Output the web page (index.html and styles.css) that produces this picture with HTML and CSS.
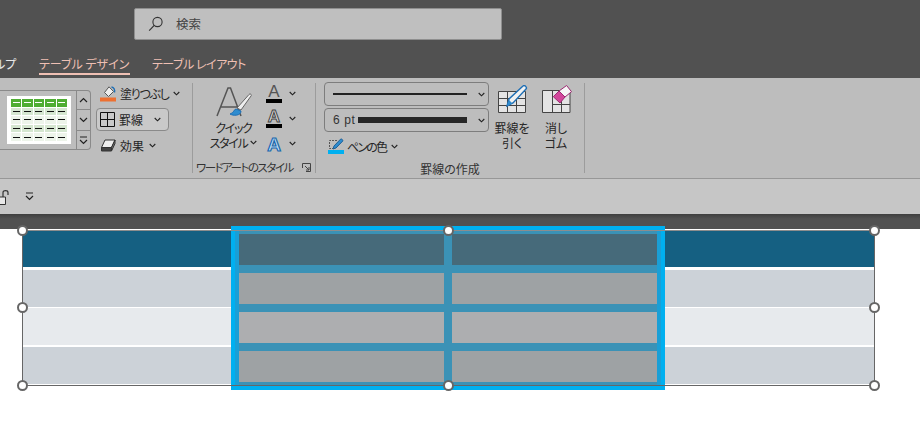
FILE: index.html
```html
<!DOCTYPE html>
<html lang="ja">
<head>
    <meta charset="UTF-8">
    <title>テーブル デザイン</title>
    <link rel="stylesheet" href="styles.css">
</head>
<body>

    <!-- Title bar + tabs -->
    <header class="top">
        <div class="search">
            <svg class="search-icon" width="16" height="16" viewBox="0 0 16 16"><circle cx="9.5" cy="6" r="4.6" fill="none" stroke="#333" stroke-width="1.1"/><path d="M6.2 9.4 1.2 14.6" stroke="#333" stroke-width="1.2"/></svg>
            <span>検索</span>
        </div>
        <nav class="tabs">
            <span class="tab tab-cut">ルプ</span>
            <span class="tab tab-active">テーブル デザイン</span>
            <span class="tab tab-next">テーブル レイアウト</span>
        </nav>
    </header>

    <!-- Ribbon -->
    <section class="ribbon">
        <div class="group group-styles">
            <div class="gallery">
                <div class="thumb">
                    <div class="thumb-grid">
                        <i class="g"></i><i class="g"></i><i class="g"></i><i class="g"></i><i class="g"></i>
                        <i class="d"></i><i class="d"></i><i class="d"></i><i class="d"></i><i class="d"></i>
                        <i class="l"></i><i class="l"></i><i class="l"></i><i class="l"></i><i class="l"></i>
                        <i class="d"></i><i class="d"></i><i class="d"></i><i class="d"></i><i class="d"></i>
                        <i class="l"></i><i class="l"></i><i class="l"></i><i class="l"></i><i class="l"></i>
                    </div>
                </div>
                <div class="spin">
                    <div class="spin-btn"><svg width="9" height="6" viewBox="0 0 9 6"><path d="M1 5 4.5 1.5 8 5" fill="none" stroke="#222" stroke-width="1.2"/></svg></div>
                    <div class="spin-btn"><svg width="9" height="6" viewBox="0 0 9 6"><path d="M1 1 4.5 4.5 8 1" fill="none" stroke="#222" stroke-width="1.2"/></svg></div>
                    <div class="spin-btn"><svg width="9" height="9" viewBox="0 0 9 9"><path d="M1 1H8M1 4 4.5 7.5 8 4" fill="none" stroke="#222" stroke-width="1.2"/></svg></div>
                </div>
            </div>
            <div class="fill-col">
                <div class="cmd">
                    <svg class="cmd-icon" width="16" height="16" viewBox="0 0 16 16"><path d="M9 .8 13.500 5.500 8.500 10.500 4.500 6.500Z" fill="#eee" stroke="#555"/><path d="M11.500 1c2.500.3 3.500 2.500 3 5.500" fill="none" stroke="#1f6fb5" stroke-width="1.500"/><rect y="11.500" width="16" height="4" fill="#ed7031"/></svg>
                    <span class="kana">塗りつぶし</span>
                    <svg class="chev" width="7" height="5" viewBox="0 0 7 5"><path d="M.7 1 3.5 3.8 6.3 1" fill="none" stroke="#222" stroke-width="1.1"/></svg>
                </div>
                <div class="cmd cmd-on">
                    <svg class="cmd-icon" width="15" height="15" viewBox="0 0 15 15"><path d="M.5.5H14.5V14.5H.5ZM7.5.5V14.5M.5 7.5H14.5" fill="none" stroke="#111"/></svg>
                    <span>罫線</span>
                    <svg class="chev chev-far" width="7" height="5" viewBox="0 0 7 5"><path d="M.7 1 3.5 3.8 6.3 1" fill="none" stroke="#222" stroke-width="1.1"/></svg>
                </div>
                <div class="cmd">
                    <svg class="cmd-icon" width="16" height="13" viewBox="0 0 16 13"><path d="M5 1H15L11.5 8.5H1.5Z" fill="#eee" stroke="#333"/><path d="M1.5 8.5H11.5V12H1.5Z" fill="#444" stroke="#333"/><path d="M11.5 8.5 15 1V4.5L11.5 12Z" fill="#777" stroke="#333"/></svg>
                    <span>効果</span>
                    <svg class="chev" width="7" height="5" viewBox="0 0 7 5"><path d="M.7 1 3.5 3.8 6.3 1" fill="none" stroke="#222" stroke-width="1.1"/></svg>
                </div>
            </div>
        </div>

        <div class="group group-wordart">
            <div class="group-body">
                <div class="big-btn big-quick">
                    <svg width="36" height="34" viewBox="0 0 36 34"><path d="M1 30 12 2h2.500L25 30M5 21H21" fill="none" stroke="#555" stroke-width="1.500"/><path d="M21 22 33 8.500c1.500-1.500 3 .5 2 1.500L25 24Z" fill="#eee" stroke="#666"/><path d="M20 23c-2 0-2 4-6 5 3 2 11 2 11-3Z" fill="#2e8ccf" stroke="#1f6fb5"/></svg>
                    <span class="kana">クイック</span>
                    <span class="kana">スタイル <svg width="7" height="5" viewBox="0 0 7 5"><path d="M.7 1 3.5 3.8 6.3 1" fill="none" stroke="#222" stroke-width="1.1"/></svg></span>
                </div>
                <div class="text-col">
                    <div class="a-row">
                        <div class="a-icon"><span class="a-thin">A</span><b></b></div>
                        <svg width="7" height="5" viewBox="0 0 7 5"><path d="M.7 1 3.5 3.8 6.3 1" fill="none" stroke="#222" stroke-width="1.1"/></svg>
                    </div>
                    <div class="a-row">
                        <div class="a-icon"><span class="a-out">A</span><b></b></div>
                        <svg width="7" height="5" viewBox="0 0 7 5"><path d="M.7 1 3.5 3.8 6.3 1" fill="none" stroke="#222" stroke-width="1.1"/></svg>
                    </div>
                    <div class="a-row">
                        <div class="a-icon"><span class="a-blue">A</span></div>
                        <svg width="7" height="5" viewBox="0 0 7 5"><path d="M.7 1 3.5 3.8 6.3 1" fill="none" stroke="#222" stroke-width="1.1"/></svg>
                    </div>
                </div>
            </div>
            <div class="group-label group-label-launch">
                <span class="kana">ワードアートのスタイル</span>
                <svg width="9" height="9" viewBox="0 0 9 9"><path d="M.5 5V.5H8.500V8.500H4M3 3 7 7M7 4V7H4" fill="none" stroke="#444"/></svg>
            </div>
        </div>

        <div class="group group-draw">
            <div class="group-body">
                <div class="pen-col">
                    <div class="drop">
                        <span class="line-thin"></span>
                        <svg width="7" height="5" viewBox="0 0 7 5"><path d="M.7 1 3.5 3.8 6.3 1" fill="none" stroke="#222" stroke-width="1.1"/></svg>
                    </div>
                    <div class="drop">
                        <span class="pt">6 pt</span><span class="line-thick"></span>
                        <svg width="7" height="5" viewBox="0 0 7 5"><path d="M.7 1 3.5 3.8 6.3 1" fill="none" stroke="#222" stroke-width="1.1"/></svg>
                    </div>
                    <div class="cmd cmd-pen">
                        <svg class="cmd-icon" width="16" height="16" viewBox="0 0 16 16"><path d="M9 2.500H1.500V10.500H5" fill="none" stroke="#555" stroke-dasharray="2 1"/><path d="M5 11 6 8 12.500 1.200c1-.9 3 1 2.100 2L8 10Z" fill="#2e8ccf" stroke="#1f5f96"/><rect y="12" width="16" height="4" fill="#00b0f0"/></svg>
                        <span class="kana">ペンの色</span>
                        <svg class="chev chev-wide" width="7" height="5" viewBox="0 0 7 5"><path d="M.7 1 3.5 3.8 6.3 1" fill="none" stroke="#222" stroke-width="1.1"/></svg>
                    </div>
                </div>
                <div class="big-btn big-draw">
                    <svg width="32" height="28" viewBox="0 0 32 28"><path d="M2.500 6.500H29.500V27.500H2.500Z" fill="#e4e4e4" stroke="#444"/><path d="M2.500 13.500H29.500M2.500 20.500H29.500M11.500 6.500V27.500M20.500 6.500V27.500" fill="none" stroke="#444"/><path d="M11 21 13 14 27 1c1.500-1.500 4.500 1.500 3 3L17 18Z" fill="#f2f2f2" stroke="#1f6fb5" stroke-width="1.400"/><path d="M11 21 13 15 16.500 18.500Z" fill="#2e8ccf"/></svg>
                    <span>罫線を</span>
                    <span>引く</span>
                </div>
                <div class="big-btn big-erase">
                    <svg width="32" height="28" viewBox="0 0 32 28"><path d="M2.500 5.500H30V27.500H2.500Z" fill="#e4e4e4" stroke="#444"/><path d="M12.500 5.500V27.500M21.500 5.500V27.500M12.500 19.500H30" fill="none" stroke="#444"/><path d="M19 6 26.600.5 31.500 6.700 25 12Z" fill="#f6f6f6" stroke="#9c2a72"/><path d="M13.300 11.700 19 6 25 12 20 18Z" fill="#d2479b" stroke="#9c2a72"/></svg>
                    <span>消し</span>
                    <span>ゴム</span>
                </div>
            </div>
            <div class="group-label">罫線の作成</div>
        </div>
    </section>

    <!-- Quick access row -->
    <section class="qat">
        <svg width="9" height="16" viewBox="0 0 9 16"><path d="M0 8H5.500V15.500H0" fill="#e8e8e8" stroke="#333"/><path d="M3 8V3.500C3 1 8 1 8 3.500V6" fill="none" stroke="#333" stroke-width="1.200"/></svg>
        <svg class="qat-drop" width="9" height="9" viewBox="0 0 9 9"><path d="M1 1H8M1 4 4.500 7.500 8 4" fill="none" stroke="#222" stroke-width="1.200"/></svg>
    </section>
    <div class="strip"></div>

    <!-- Slide -->
    <main class="slide">
        <div class="table">
            <div class="row row-head"></div>
            <div class="row row-dark"></div>
            <div class="row row-light"></div>
            <div class="row row-dark"></div>
        </div>

        <!-- selected columns, on top of the table -->
        <div class="sel">
            <div class="cell c-head"></div><div class="cell c-head"></div>
            <div class="cell c-dark"></div><div class="cell c-dark"></div>
            <div class="cell c-light"></div><div class="cell c-light"></div>
            <div class="cell c-dark"></div><div class="cell c-dark"></div>
        </div>

        <div class="frame"></div>
        <span class="handle h-tl"></span>
        <span class="handle h-tc"></span>
        <span class="handle h-tr"></span>
        <span class="handle h-ml"></span>
        <span class="handle h-mr"></span>
        <span class="handle h-bl"></span>
        <span class="handle h-bc"></span>
        <span class="handle h-br"></span>
    </main>

</body>
</html>
```

FILE: styles.css
```css
/* Reset */
* {
    margin: 0;
    padding: 0;
    box-sizing: border-box;
}

body {
    width: 920px;
    height: 432px;
    overflow: hidden;
    display: flex;
    flex-direction: column;
    background: #fff;
    color: #262626;
    font-family: "Noto Sans CJK JP", "Noto Sans", sans-serif;
    font-size: 12px;
    font-feature-settings: "palt";
    line-height: 15px;
}

svg {
    display: block;
    flex: none;
}

/* kana run narrower than the CJK font draws it */
.kana {
    letter-spacing: -1.3px;
}

/* Title bar */
.top {
    height: 78px;
    background: #515151;
    display: flex;
    flex-direction: column;
    padding-top: 8px;
}

.search {
    width: 368px;
    height: 32px;
    margin-left: 134px;
    background: #bfbfbf;
    border: 1px solid #8f8f8f;
    border-radius: 2px;
    display: flex;
    align-items: center;
    padding-left: 13px;
    padding-bottom: 1px;
    color: #444;
    font-size: 12.5px;
}

.search-icon {
    margin-right: 12px;
}

.tabs {
    display: flex;
    margin-top: 14px;
    color: #efc0b4;
    font-size: 12px;
    line-height: 20px;
}

.tab {
    height: 21px;
    white-space: nowrap;
}

.tab-cut {
    width: 39px;
    color: #e9e9e9;
    text-indent: -6px;
}

.tab-active {
    width: 91px;
    margin-right: 22px;
    border-bottom: 2px solid #efc0b4;
}

.tab-next {
    letter-spacing: -.5px;
}

/* Ribbon */
.ribbon {
    height: 101px;
    background: #bdbdbd;
    border-bottom: 1px solid #979797;
    display: flex;
    padding-top: 5px;
}

.group {
    height: 90px;
    border-right: 1px solid #9c9c9c;
    display: flex;
}

.group-styles {
    width: 193px;
    padding-top: 7px;
}

.group-wordart,
.group-draw {
    flex-direction: column;
}

.group-wordart {
    width: 123px;
}

.group-draw {
    width: 269px;
}

.group-body {
    flex: 1;
    display: flex;
}

.group-label {
    height: 12px;
    line-height: 15px;
    text-align: center;
    color: #333;
}

.group-label-launch {
    display: flex;
    justify-content: space-between;
    padding: 0 4px 0 3px;
    align-items: center;
}

.group-label-launch .kana {
    font-size: 11.5px;
    letter-spacing: -1.5px;
}

/* Table style gallery */
.gallery {
    width: 91px;
    height: 60px;
    display: flex;
    padding-left: 7px;
    border: 1px solid #8a8a8a;
    border-left: none;
    border-radius: 0 4px 4px 0;
    position: relative;
}

.thumb {
    width: 64px;
    height: 48px;
    margin-top: 5px;
    padding: 3px 4px;
    background: #fff;
}

.thumb-grid {
    display: grid;
    grid-template-columns: repeat(5, 1fr);
    grid-template-rows: repeat(5, 1fr);
    gap: 1px;
    height: 100%;
}

.thumb-grid i {
    display: flex;
    align-items: center;
    justify-content: center;
}

.thumb-grid i::after {
    content: "";
    width: 7px;
    height: 1px;
    background: #111;
}

.thumb-grid .g { background: #4fad33; }
.thumb-grid .g::after { background: #fff; }
.thumb-grid .d { background: #d5e6d0; }
.thumb-grid .l { background: #edf4ea; }

.spin {
    width: 14px;
    margin-left: 5px;
    display: flex;
    flex-direction: column;
    border-left: 1px solid #8a8a8a;
    margin-top: -1px;
    margin-bottom: -1px;
}

.spin-btn {
    flex: 1;
    display: flex;
    align-items: center;
    justify-content: center;
    border-bottom: 1px solid #8a8a8a;
}

.spin-btn:last-child {
    border-bottom: none;
}

/* Small commands */
.fill-col {
    margin-top: -8px;
    margin-left: 5px;
    width: 90px;
    display: flex;
    flex-direction: column;
    gap: 3px;
}

.cmd {
    height: 23px;
    display: flex;
    align-items: center;
    padding-left: 4px;
    white-space: nowrap;
    font-size: 12px;
}

.cmd-icon {
    margin-right: 4px;
}

.chev {
    margin-left: 5px;
}

.chev-far {
    margin-left: 11px;
}

.chev-wide {
    margin-left: 5px;
}

.cmd-on {
    width: 73px;
    background: #c9c9c9;
    border: 1px solid #8a8a8a;
    border-radius: 4px;
    padding-left: 3px;
}

/* Word art */
.big-btn {
    display: flex;
    flex-direction: column;
    align-items: center;
    font-size: 12px;
    white-space: nowrap;
}

.big-btn span {
    display: flex;
    align-items: center;
    gap: 3px;
}

.big-quick {
    width: 65px;
    margin-left: 8px;
    padding-top: 3px;
}

.text-col {
    padding-top: 1px;
    display: flex;
    flex-direction: column;
    gap: 6px;
}

.a-row {
    display: flex;
    align-items: center;
    gap: 7px;
    height: 19px;
}

.a-icon {
    width: 16px;
    display: flex;
    flex-direction: column;
    align-items: center;
    font-family: "Liberation Sans", sans-serif;
    font-size: 17px;
    line-height: 14px;
}

.a-icon b {
    width: 16px;
    height: 4px;
    background: #000;
}

.a-thin {
    color: #555;
}

.a-out {
    color: #ddd;
    font-weight: 700;
    -webkit-text-stroke: 1px #444;
}

.a-blue {
    margin-top: 2px;
    color: #bfe0f8;
    font-weight: 700;
    font-size: 19px;
    line-height: 18px;
    -webkit-text-stroke: 1.2px #1b68ad;
}

/* Border drawing */
.pen-col {
    width: 165px;
    margin-left: 8px;
    margin-top: -1px;
    display: flex;
    flex-direction: column;
    gap: 2px;
}

.drop {
    height: 24px;
    border: 1px solid #7d7d7d;
    border-radius: 4px;
    display: flex;
    align-items: center;
    padding: 0 3px 0 8px;
}

.drop svg {
    margin-left: auto;
}

.line-thin {
    width: 134px;
    height: 2px;
    background: #222;
}

.pt {
    width: 25px;
    color: #333;
    font-family: "Liberation Sans", sans-serif;
    font-size: 12px;
    letter-spacing: .6px;
}

.line-thick {
    width: 109px;
    height: 6px;
    background: #262626;
}

.cmd-pen {
    margin-top: 1px;
    height: 22px;
}

.cmd-pen .cmd-icon {
    margin-right: 3px;
}

.cmd-pen .kana {
    letter-spacing: -1.8px;
}

.big-draw {
    width: 38px;
    margin-left: 4px;
    padding-top: 2px;
}

.big-erase {
    width: 34px;
    margin-left: 8px;
    padding-top: 2px;
}

.big-draw svg,
.big-erase svg {
    margin-bottom: 7px;
}

/* Quick access */
.qat {
    height: 35px;
    background: #c6c6c6;
    display: flex;
    align-items: center;
}

.qat-drop {
    margin-left: 16px;
}

.strip {
    height: 15px;
    background: linear-gradient(#3f3f3f, #515151 5px);
}

/* Slide */
.slide {
    flex: 1;
    position: relative;
}

.table {
    position: absolute;
    left: 22px;
    top: 2px;
    width: 852px;
    height: 154px;
    display: flex;
    flex-direction: column;
}

.row {
    height: 37px;
    border-bottom: 1px solid #fff;
}

.row-head {
    height: 36px;
    background: #156082;
    margin-bottom: 3px;
    border: none;
}

.row-dark {
    background: #ccd2d8;
    height: 38px;
}

.row-light {
    background: #e7eaed;
    height: 38px;
    margin-bottom: 1px;
}

/* Selected cells */
.sel {
    position: absolute;
    left: 231px;
    top: -3px;
    width: 434px;
    height: 164px;
    padding: 4px;
    background: #3b92b6;
    border: 4px solid #00b0f0;
    box-shadow: inset 4px 0 0 #1a9fd6, inset -4px 0 0 #1a9fd6;
    display: grid;
    grid-template-columns: 205px 205px;
    grid-template-rows: repeat(4, 31px);
    gap: 8px;
}

.c-head { background: #466a7a; }
.c-dark { background: #9ea2a4; }
.c-light { background: #adaeb0; }

/* Selection frame and handles */
.frame {
    position: absolute;
    left: 22px;
    top: 1px;
    width: 853px;
    height: 156px;
    border: 1px solid #666;
    border-top-color: #8d8d8d;
}

.handle {
    position: absolute;
    width: 11px;
    height: 11px;
    margin: -5px 0 0 -5px;
    background: #fff;
    border: 2px solid #666;
    border-radius: 50%;
}

.h-tl { left: 22px; top: 1px; }
.h-tc { left: 448px; top: 1px; }
.h-tr { left: 874px; top: 1px; }
.h-ml { left: 22px; top: 78px; }
.h-mr { left: 874px; top: 78px; }
.h-bl { left: 22px; top: 156px; }
.h-bc { left: 448px; top: 156px; }
.h-br { left: 874px; top: 156px; }
```
